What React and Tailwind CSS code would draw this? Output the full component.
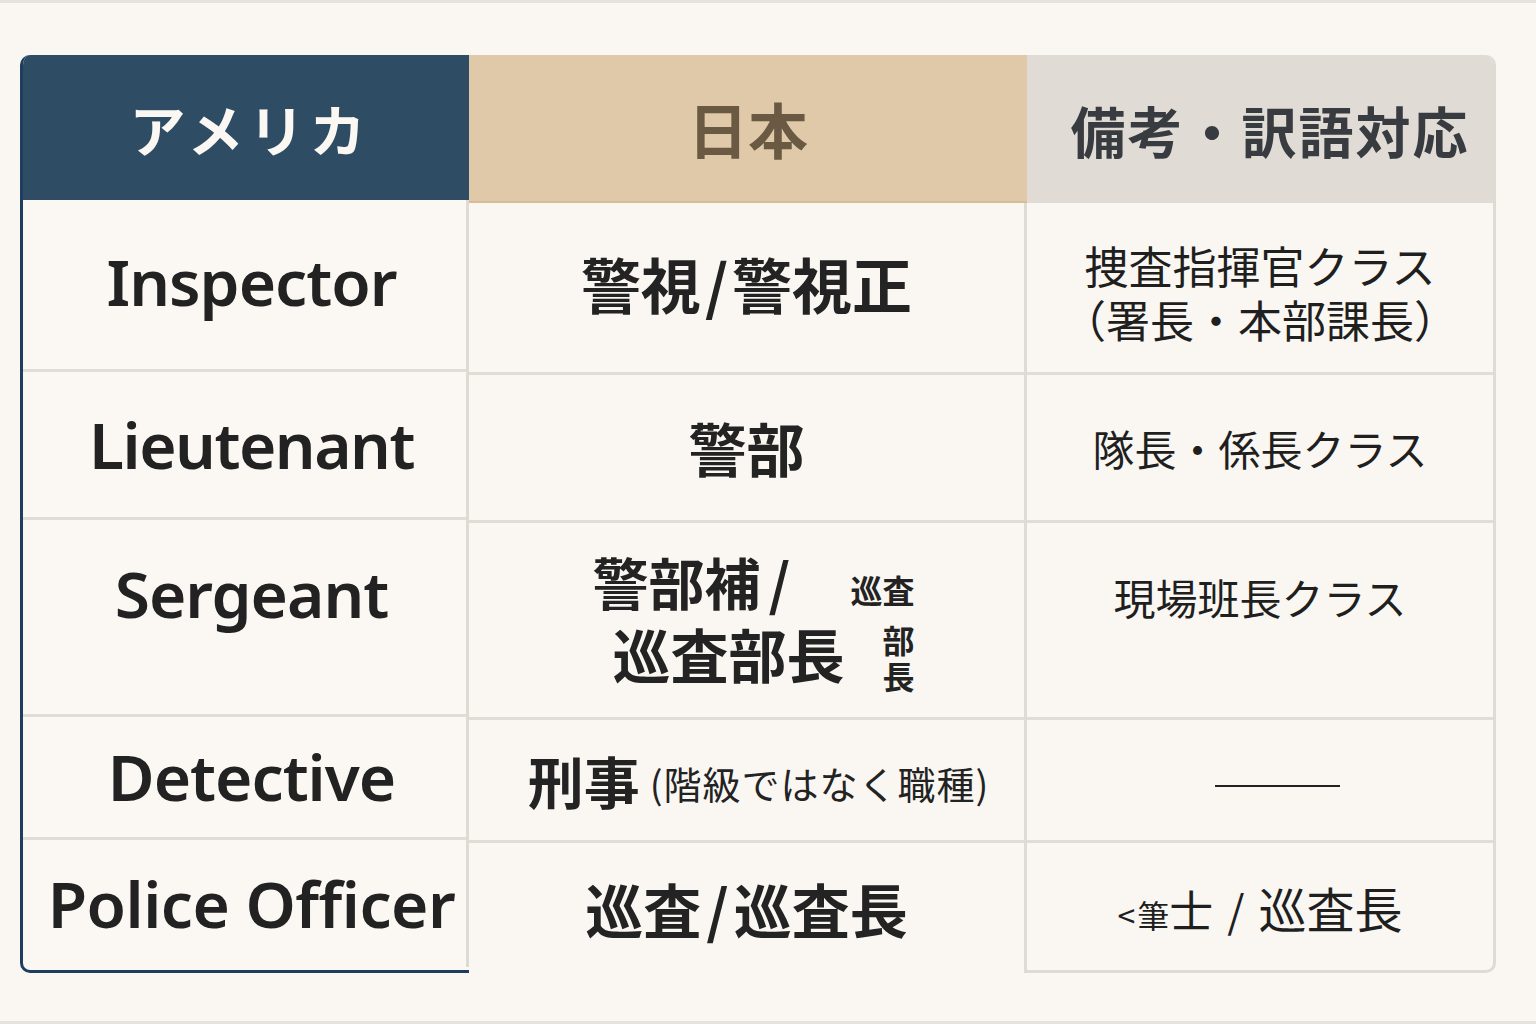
const latin = "font-['Noto_Sans','Noto_Sans_CJK_JP',sans-serif]";
const jp = "font-['Noto_Sans_CJK_JP','Noto_Sans',sans-serif]";

const rowHeights = ["h-[172px]", "h-[148px]", "h-[197px]", "h-[123px]", "h-[130px]"];

function Cell({ h, last, children, className = "" }) {
  return (
    <div
      className={`${h} flex items-center justify-center ${last ? "" : "border-b-[3px] border-[#e0dcd6]"} ${className}`}
    >
      {children}
    </div>
  );
}

export default function App() {
  return (
    <div className="min-h-[1024px] w-[1536px] border-y-[3px] border-[#e6e3de] bg-[#faf7f2] pl-[20px] pt-[52px]">
      <div className="flex w-[1476px]">
        {/* アメリカ */}
        <div className="w-[449px] overflow-hidden rounded-tl-[10px] rounded-bl-[10px] border-b-[3px] border-l-[3px] border-[#1f3d5e] bg-[#fbf8f3]">
          <div className="flex h-[145px] items-center justify-center bg-[#2f4c65] pl-[8px]">
            <span className={`${jp} text-[56px] font-bold tracking-[5px] text-[#fbf8f3]`}>アメリカ</span>
          </div>
          <div className={`${latin} border-r-[3px] border-[#dedad4] text-[#222222]`}>
            <Cell h={rowHeights[0]} className="pl-[14px]">
              <span className="mb-[6px] text-[64px] font-semibold tracking-[-1px]">Inspector</span>
            </Cell>
            <Cell h={rowHeights[1]} className="pl-[14px]">
              <span className="text-[64px] font-semibold tracking-[-1.5px]">Lieutenant</span>
            </Cell>
            <Cell h={rowHeights[2]} className="!items-start pl-[14px] pt-[26px]">
              <span className="text-[64px] font-semibold tracking-[-1px]">Sergeant</span>
            </Cell>
            <Cell h={rowHeights[3]} className="pl-[14px]">
              <span className="text-[64px] font-semibold tracking-[-1px]">Detective</span>
            </Cell>
            <Cell h="!h-[127px]" className="pl-[14px]" last>
              <span className="text-[64px] font-semibold tracking-[-0.5px]">Police Officer</span>
            </Cell>
          </div>
        </div>

        {/* 日本 */}
        <div className={`${jp} w-[558px] text-[#232323]`}>
          <div className="flex h-[148px] items-center justify-center border-b-[2px] border-[#d8bd94] bg-[#dfc9a8]">
            <span className="text-[60px] font-bold text-[#6a5a44]">日本</span>
          </div>
          <div className="border-r-[3px] border-[#dedad4]">
            <Cell h={rowHeights[0]}>
              <span className="mb-[10px] text-[60px] font-bold">
                警視<span className="mx-[4px]">/</span>警視正
              </span>
            </Cell>
            <Cell h={rowHeights[1]}>
              <span className="text-[58px] font-bold">警部</span>
            </Cell>
            <Cell h={rowHeights[2]} className="!items-start pt-[22px]">
              <div className="flex items-start gap-[6px] pl-[14px]">
                <div className="flex flex-col font-bold leading-[72px]">
                  <span className="text-[56px]">
                    警部補<span className="ml-[8px]">/</span>
                  </span>
                  <span className="pl-[20px] text-[58px]">巡査部長</span>
                </div>
                <div className="flex flex-col items-end pt-[26px] text-[32px] font-bold leading-[36px]">
                  <span>巡査</span>
                  <span className="mt-[14px]">部</span>
                  <span>長</span>
                </div>
              </div>
            </Cell>
            <Cell h={rowHeights[3]}>
              <span className="ml-[24px] text-[56px] font-bold">刑事</span>
              <span className="ml-[10px] mt-[4px] text-[38px] tracking-[1px]">(階級ではなく職種)</span>
            </Cell>
            <Cell h={rowHeights[4]} last>
              <span className="text-[58px] font-bold">
                巡査<span className="mx-[5px]">/</span>巡査長
              </span>
            </Cell>
          </div>
        </div>

        {/* 備考 */}
        <div className={`${jp} w-[469px] overflow-hidden rounded-tr-[10px] rounded-br-[10px] border-b-[3px] border-r-[3px] border-[#dedad4] text-[#1f1f1f]`}>
          <div className="flex h-[148px] items-center justify-center bg-[#e0dcd5] pl-[20px]">
            <span className="text-[55px] font-bold tracking-[2px] text-[#383b40]">備考・訳語対応</span>
          </div>
          <div>
            <Cell h={rowHeights[0]}>
              <div className="mt-[8px] flex flex-col items-center text-[44px] leading-[54px]">
                <span>捜査指揮官クラス</span>
                <span>（署長・本部課長）</span>
              </div>
            </Cell>
            <Cell h={rowHeights[1]}>
              <span className="text-[42px]">隊長・係長クラス</span>
            </Cell>
            <Cell h={rowHeights[2]} className="!items-start pt-[42px]">
              <span className="text-[42px]">現場班長クラス</span>
            </Cell>
            <Cell h={rowHeights[3]}>
              <span className="ml-[34px] mt-[12px] h-[2px] w-[125px] bg-[#222222]" />
            </Cell>
            <Cell h="!h-[127px]" last>
              <span className="flex items-baseline">
                <span className="text-[32px]">&lt;</span>
                <span className="ml-[2px] text-[32px]">筆</span>
                <span className="text-[44px]">士</span>
                <span className="mx-[14px] text-[44px]">/</span>
                <span className="text-[48px]">巡査長</span>
              </span>
            </Cell>
          </div>
        </div>
      </div>
    </div>
  );
}
